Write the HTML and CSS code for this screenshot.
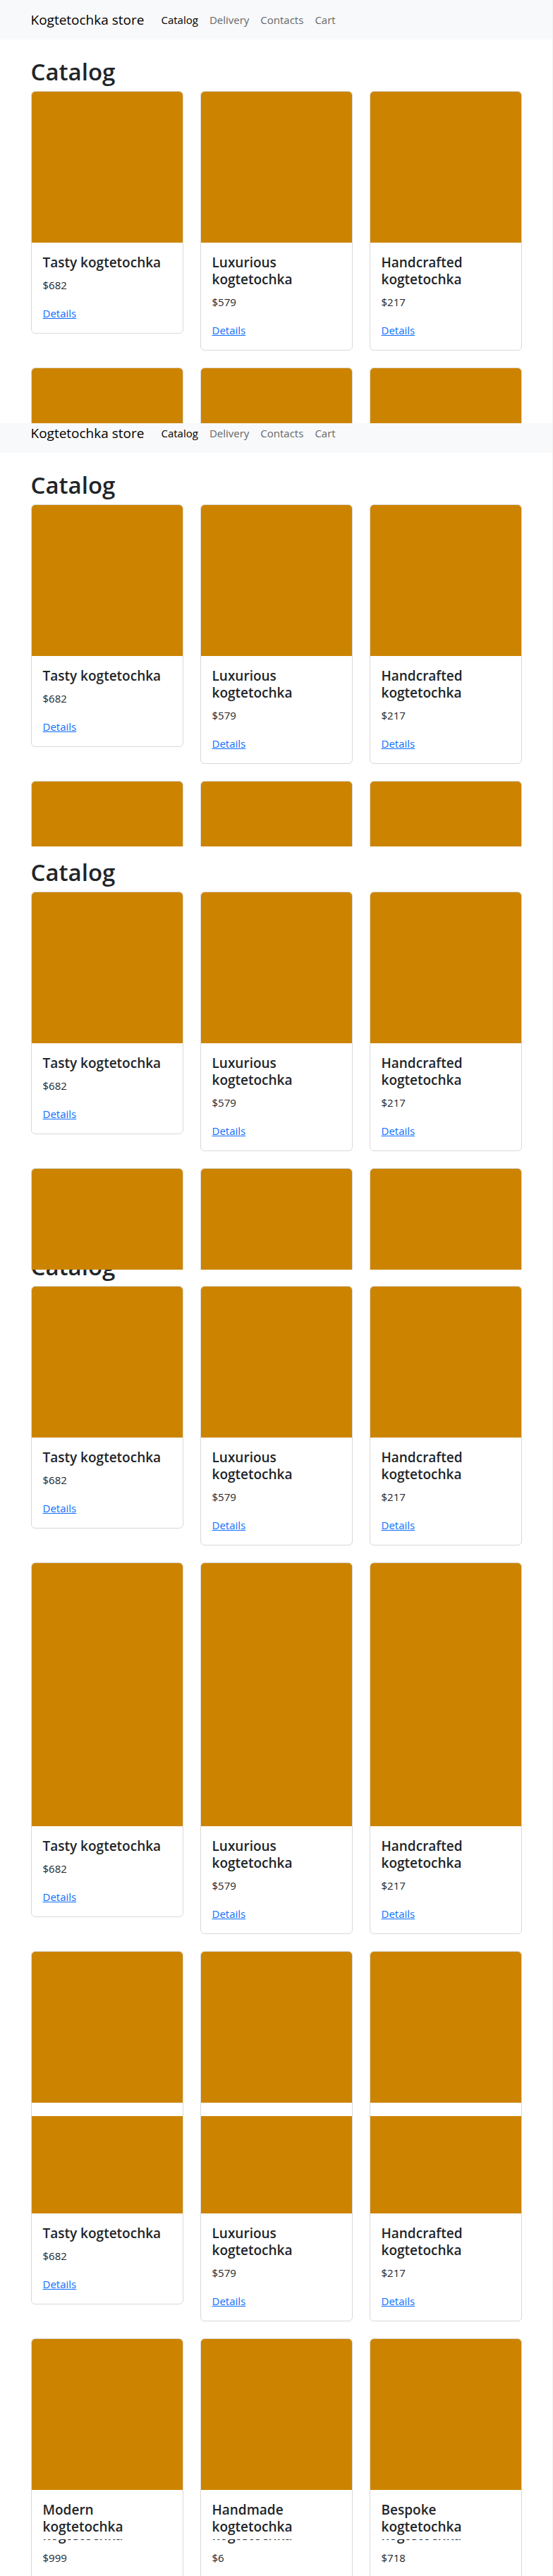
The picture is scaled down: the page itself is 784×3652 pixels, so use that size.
FILE: index.html
```html
<!DOCTYPE html>
<html lang="en">
<head>
<meta charset="utf-8">
<meta name="viewport" content="width=device-width, initial-scale=1">
<title>Kogtetochka store</title>
<link rel="stylesheet" href="styles.css">
</head>
<body>

<section class="view">
  <header class="navbar">
    <div class="container navbar-inner">
      <a class="brand" href="#">Kogtetochka store</a>
      <nav class="nav">
        <a class="nav-link active" href="#">Catalog</a>
        <a class="nav-link" href="#">Delivery</a>
        <a class="nav-link" href="#">Contacts</a>
        <a class="nav-link" href="#">Cart</a>
      </nav>
    </div>
  </header>
  <main class="container main">
    <h1 class="heading">Catalog</h1>
    <div class="row">
      <article class="card"><div class="media"></div><div class="card-body"><h2 class="title">Tasty kogtetochka</h2><p class="price">$682</p><a class="details" href="#">Details</a></div></article>
      <article class="card"><div class="media"></div><div class="card-body"><h2 class="title">Luxurious kogtetochka</h2><p class="price">$579</p><a class="details" href="#">Details</a></div></article>
      <article class="card"><div class="media"></div><div class="card-body"><h2 class="title">Handcrafted kogtetochka</h2><p class="price">$217</p><a class="details" href="#">Details</a></div></article>
    </div>
    <div class="row">
      <article class="card"><div class="media"></div></article>
      <article class="card"><div class="media"></div></article>
      <article class="card"><div class="media"></div></article>
    </div>
  </main>
</section>

<section class="view">
  <header class="navbar navbar-scrolled">
    <div class="container navbar-inner">
      <a class="brand" href="#">Kogtetochka store</a>
      <nav class="nav">
        <a class="nav-link active" href="#">Catalog</a>
        <a class="nav-link" href="#">Delivery</a>
        <a class="nav-link" href="#">Contacts</a>
        <a class="nav-link" href="#">Cart</a>
      </nav>
    </div>
  </header>
  <main class="container main">
    <h1 class="heading">Catalog</h1>
    <div class="row">
      <article class="card"><div class="media"></div><div class="card-body"><h2 class="title">Tasty kogtetochka</h2><p class="price">$682</p><a class="details" href="#">Details</a></div></article>
      <article class="card"><div class="media"></div><div class="card-body"><h2 class="title">Luxurious kogtetochka</h2><p class="price">$579</p><a class="details" href="#">Details</a></div></article>
      <article class="card"><div class="media"></div><div class="card-body"><h2 class="title">Handcrafted kogtetochka</h2><p class="price">$217</p><a class="details" href="#">Details</a></div></article>
    </div>
    <div class="row">
      <article class="card"><div class="media"></div></article>
      <article class="card"><div class="media"></div></article>
      <article class="card"><div class="media"></div></article>
    </div>
  </main>
</section>

<section class="view">
  <main class="container main main-past-nav">
    <h1 class="heading">Catalog</h1>
    <div class="row">
      <article class="card"><div class="media"></div><div class="card-body"><h2 class="title">Tasty kogtetochka</h2><p class="price">$682</p><a class="details" href="#">Details</a></div></article>
      <article class="card"><div class="media"></div><div class="card-body"><h2 class="title">Luxurious kogtetochka</h2><p class="price">$579</p><a class="details" href="#">Details</a></div></article>
      <article class="card"><div class="media"></div><div class="card-body"><h2 class="title">Handcrafted kogtetochka</h2><p class="price">$217</p><a class="details" href="#">Details</a></div></article>
    </div>
    <div class="row">
      <article class="card"><div class="media"></div></article>
      <article class="card"><div class="media"></div></article>
      <article class="card"><div class="media"></div></article>
    </div>
  </main>
</section>

<section class="view">
  <main class="container main main-mid-heading">
    <h1 class="heading">Catalog</h1>
    <div class="row">
      <article class="card"><div class="media"></div><div class="card-body"><h2 class="title">Tasty kogtetochka</h2><p class="price">$682</p><a class="details" href="#">Details</a></div></article>
      <article class="card"><div class="media"></div><div class="card-body"><h2 class="title">Luxurious kogtetochka</h2><p class="price">$579</p><a class="details" href="#">Details</a></div></article>
      <article class="card"><div class="media"></div><div class="card-body"><h2 class="title">Handcrafted kogtetochka</h2><p class="price">$217</p><a class="details" href="#">Details</a></div></article>
    </div>
    <div class="row">
      <article class="card"><div class="media"></div></article>
      <article class="card"><div class="media"></div></article>
      <article class="card"><div class="media"></div></article>
    </div>
  </main>
</section>

<section class="view">
  <main class="container main-in-cards">
    <div class="row">
      <article class="card"><div class="media"></div><div class="card-body"><h2 class="title">Tasty kogtetochka</h2><p class="price">$682</p><a class="details" href="#">Details</a></div></article>
      <article class="card"><div class="media"></div><div class="card-body"><h2 class="title">Luxurious kogtetochka</h2><p class="price">$579</p><a class="details" href="#">Details</a></div></article>
      <article class="card"><div class="media"></div><div class="card-body"><h2 class="title">Handcrafted kogtetochka</h2><p class="price">$217</p><a class="details" href="#">Details</a></div></article>
    </div>
    <div class="row">
      <article class="card"><div class="media"></div><div class="card-body"></div></article>
      <article class="card"><div class="media"></div><div class="card-body"></div></article>
      <article class="card"><div class="media"></div><div class="card-body"></div></article>
    </div>
  </main>
</section>

<section class="view">
  <main class="container main-deep-cards">
    <div class="row">
      <article class="card"><div class="media"></div><div class="card-body"><h2 class="title">Tasty kogtetochka</h2><p class="price">$682</p><a class="details" href="#">Details</a></div></article>
      <article class="card"><div class="media"></div><div class="card-body"><h2 class="title">Luxurious kogtetochka</h2><p class="price">$579</p><a class="details" href="#">Details</a></div></article>
      <article class="card"><div class="media"></div><div class="card-body"><h2 class="title">Handcrafted kogtetochka</h2><p class="price">$217</p><a class="details" href="#">Details</a></div></article>
    </div>
    <div class="row">
      <article class="card"><div class="media"></div><div class="card-body"><h2 class="title">Modern kogtetochka</h2></div></article>
      <article class="card"><div class="media"></div><div class="card-body"><h2 class="title">Handmade kogtetochka</h2></div></article>
      <article class="card"><div class="media"></div><div class="card-body"><h2 class="title">Bespoke kogtetochka</h2></div></article>
    </div>
  </main>
</section>

<section class="view view-last">
  <main class="container main-prices">
    <div class="row">
      <article class="card"><div class="card-body"><h2 class="title">kogtetochka</h2><p class="price">$999</p></div></article>
      <article class="card"><div class="card-body"><h2 class="title">kogtetochka</h2><p class="price">$6</p></div></article>
      <article class="card"><div class="card-body"><h2 class="title">kogtetochka</h2><p class="price">$718</p></div></article>
    </div>
  </main>
</section>

</body>
</html>
```

FILE: styles.css
```css
*, *::before, *::after { box-sizing: border-box; }

body {
  margin: 0;
  border-right: 1px solid #f1f1f1;
  background: #fff;
  color: #212529;
  font-family: "Segoe UI", "Open Sans", "Noto Sans", sans-serif;
  font-size: 15px;
  line-height: 24px;
}

/* Each view is one screenful of the catalog at a further scroll position. */
.view {
  display: flow-root;
  height: 600px;
  overflow: hidden;
}
.view-last { height: 52px; }

.container {
  max-width: 720px;
  margin: 0 auto;
  padding: 0 12px;
}

.navbar {
  padding: 8px 0;
  background: #f8f9fa;
}
.navbar-scrolled { margin-top: -14px; }
.navbar-inner { display: flex; align-items: center; }
.brand {
  margin-right: 16px;
  padding: 5px 0;
  color: #000;
  font-size: 19px;
  line-height: 30px;
  text-decoration: none;
}
.nav { display: flex; }
.nav-link {
  padding: 8px;
  color: #666768;
  text-decoration: none;
}
.nav-link.active { color: #000; }

.main { padding-top: 24px; }
.main-past-nav { margin-top: -9px; }
.main-mid-heading { margin-top: -50px; }
.main-in-cards { margin-top: -26px; }
.main-deep-cards { margin-top: -77px; }
.main-prices { margin-top: -35px; }

.heading {
  margin: 0 0 6px;
  font-size: 33px;
  font-weight: 600;
  line-height: 43px;
}

.row {
  display: grid;
  grid-template-columns: repeat(3, minmax(0, 1fr));
  gap: 24px;
  align-items: start;
  margin-bottom: 24px;
}
.card {
  border: 1px solid #d9d9d9;
  border-radius: 6px;
  background: #fff;
}
.media {
  aspect-ratio: 1;
  border-radius: 5px 5px 0 0;
  background: #cc8400;
}
.card-body { padding: 16px; }
.title {
  margin: 0 0 8px;
  font-size: 19px;
  font-weight: 600;
  line-height: 24px;
}
.price { margin: 0 0 16px; }
.details { color: #0d6efd; }
```
